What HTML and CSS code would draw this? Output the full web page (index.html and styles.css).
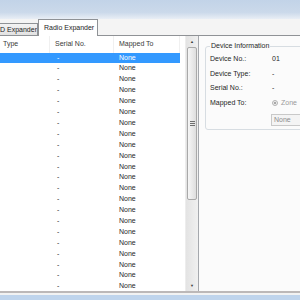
FILE: index.html
```html
<!DOCTYPE html>
<html lang="en">
<head>
  <meta charset="UTF-8">
  <title>Radio Expander</title>
  <link rel="stylesheet" href="styles.css">
</head>
<body>
  <div class="caption"></div>

  <div class="tabs">
    <div class="tab">D Expander</div>
    <div class="tab active">Radio Expander</div>
  </div>

  <div class="page">
    <div class="list">
      <div class="list-body">
        <div class="row head">
          <span class="c1">Type</span>
          <span class="c2">Serial No.</span>
          <span class="c3">Mapped To</span>
        </div>
        <div class="row selected"><span class="c1"></span><span class="c2">-</span><span class="c3">None</span></div>
        <div class="row"><span class="c1"></span><span class="c2">-</span><span class="c3">None</span></div>
        <div class="row"><span class="c1"></span><span class="c2">-</span><span class="c3">None</span></div>
        <div class="row"><span class="c1"></span><span class="c2">-</span><span class="c3">None</span></div>
        <div class="row"><span class="c1"></span><span class="c2">-</span><span class="c3">None</span></div>
        <div class="row"><span class="c1"></span><span class="c2">-</span><span class="c3">None</span></div>
        <div class="row"><span class="c1"></span><span class="c2">-</span><span class="c3">None</span></div>
        <div class="row"><span class="c1"></span><span class="c2">-</span><span class="c3">None</span></div>
        <div class="row"><span class="c1"></span><span class="c2">-</span><span class="c3">None</span></div>
        <div class="row"><span class="c1"></span><span class="c2">-</span><span class="c3">None</span></div>
        <div class="row"><span class="c1"></span><span class="c2">-</span><span class="c3">None</span></div>
        <div class="row"><span class="c1"></span><span class="c2">-</span><span class="c3">None</span></div>
        <div class="row"><span class="c1"></span><span class="c2">-</span><span class="c3">None</span></div>
        <div class="row"><span class="c1"></span><span class="c2">-</span><span class="c3">None</span></div>
        <div class="row"><span class="c1"></span><span class="c2">-</span><span class="c3">None</span></div>
        <div class="row"><span class="c1"></span><span class="c2">-</span><span class="c3">None</span></div>
        <div class="row"><span class="c1"></span><span class="c2">-</span><span class="c3">None</span></div>
        <div class="row"><span class="c1"></span><span class="c2">-</span><span class="c3">None</span></div>
        <div class="row"><span class="c1"></span><span class="c2">-</span><span class="c3">None</span></div>
        <div class="row"><span class="c1"></span><span class="c2">-</span><span class="c3">None</span></div>
        <div class="row"><span class="c1"></span><span class="c2">-</span><span class="c3">None</span></div>
        <div class="row"><span class="c1"></span><span class="c2">-</span><span class="c3">None</span></div>
      </div>

      <div class="scrollbar">
        <div class="arrow">&#9650;</div>
        <div class="thumb"><span class="grip"></span></div>
        <div class="track"></div>
        <div class="arrow">&#9660;</div>
      </div>
    </div>

    <div class="details">
      <fieldset class="group">
        <legend>Device Information</legend>
        <div class="field"><span class="label">Device No.:</span><span class="value">01</span></div>
        <div class="field"><span class="label">Device Type:</span><span class="value">-</span></div>
        <div class="field"><span class="label">Serial No.:</span><span class="value">-</span></div>
        <div class="field">
          <span class="label">Mapped To:</span>
          <span class="value disabled"><span class="radio"></span>Zone</span>
        </div>
        <div class="field input-row">
          <span class="label"></span>
          <span class="select">None</span>
        </div>
      </fieldset>
    </div>
  </div>

  <div class="statusbar"></div>
</body>
</html>
```

FILE: styles.css
```css
body {
  margin: 0;
  width: 300px;
  height: 300px;
  overflow: hidden;
  font-family: "Liberation Sans", Arial, sans-serif;
  font-size: 7px;
  color: #262626;
  background-color: #f3f3f3;
}
.caption {
  height: 19px;
  background: linear-gradient(#c2d3e8 0, #cbd9ea 65%, #e9eef5 100%);
}
.tabs {
  display: flex;
  align-items: flex-end;
  height: 16px;
  background-color: #f4f4f4;
}
.tab {
  box-sizing: border-box;
  width: 38px;
  height: 12px;
  line-height: 11px;
  border: 1px solid #8f9296;
  border-left: none;
  border-bottom: none;
  background: linear-gradient(#f3f3f3, #e2e2e2);
  white-space: nowrap;
  overflow: hidden;
}
.tab.active {
  position: relative;
  z-index: 1;
  width: 60px;
  height: 17px;
  line-height: 15px;
  margin-bottom: -1px;
  padding-left: 5px;
  border-left: 1px solid #8f9296;
  background: #fff;
}
.page {
  display: flex;
  height: 255px;
  border-top: 1px solid #8f9296;
}
.list {
  display: flex;
  width: 198px;
  background-color: #fff;
  border-right: 1px solid #a5a8ad;
}
.list-body {
  width: 186px;
}
.row {
  display: flex;
  height: 10.9px;
  line-height: 10.9px;
  white-space: nowrap;
}
.row span {
  box-sizing: border-box;
  overflow: hidden;
}
.c1 {
  width: 50px;
  padding-left: 3px;
}
.c2 {
  width: 64px;
  padding-left: 7px;
}
.c3 {
  width: 66px;
  padding-left: 5px;
}
.row.head {
  height: 16.6px;
  line-height: 16px;
  color: #3a3a3a;
}
.row.head span {
  border-right: 1px solid #f0f0f0;
}
.row.head .c2 {
  padding-left: 5px;
}
.row.selected {
  width: 180px;
  background-color: #3399ff;
  color: #fff;
}
.scrollbar {
  display: flex;
  flex-direction: column;
  width: 12px;
  background: linear-gradient(90deg, #e3e3e3, #f0f0f0);
  border-left: 1px solid #ededed;
}
.arrow {
  height: 11px;
  line-height: 11px;
  text-align: center;
  font-size: 4px;
  color: #3c3c3c;
}
.thumb {
  display: flex;
  align-items: center;
  justify-content: center;
  height: 151px;
  margin: 0 1px;
  border: 1px solid #a9a9a9;
  border-radius: 2px;
  background: linear-gradient(90deg, #f6f6f6, #dedede);
}
.grip {
  width: 5px;
  height: 5px;
  background: repeating-linear-gradient(#6f6f6f 0, #6f6f6f 1px, transparent 1px, transparent 2px);
}
.track {
  flex: 1;
}
.details {
  flex: 1;
  overflow: hidden;
  padding: 5px 0 0 6px;
  background-color: #fbfbfb;
}
.group {
  width: 110px;
  margin: 0;
  padding: 1px 0 3px 4px;
  border: 1px solid #d7dde2;
  border-radius: 3px;
}
.group legend {
  padding: 0 1px;
  line-height: 10px;
}
.field {
  display: flex;
  height: 14.7px;
  line-height: 14.7px;
  white-space: nowrap;
}
.label {
  width: 62px;
}
.disabled {
  display: flex;
  align-items: center;
  color: #9a9a9a;
}
.radio {
  box-sizing: border-box;
  width: 6px;
  height: 6px;
  margin-right: 3px;
  border: 1px solid #b3b3b3;
  border-radius: 50%;
  background: radial-gradient(#a8a8a8 0, #a8a8a8 35%, #efefef 45%);
}
.input-row {
  height: 12px;
  line-height: 10px;
  margin-top: 3px;
}
.select {
  box-sizing: border-box;
  width: 40px;
  height: 12px;
  margin-left: -1px;
  padding-left: 2px;
  border: 1px solid #c9c9c9;
  background-color: #f4f4f4;
  color: #8c8c8c;
}
.statusbar {
  height: 7px;
  border-top: 2px solid #bcb8b8;
  background: linear-gradient(#f2f2f2 0, #f2f2f2 2px, #bfd4ec 2px);
}
```
